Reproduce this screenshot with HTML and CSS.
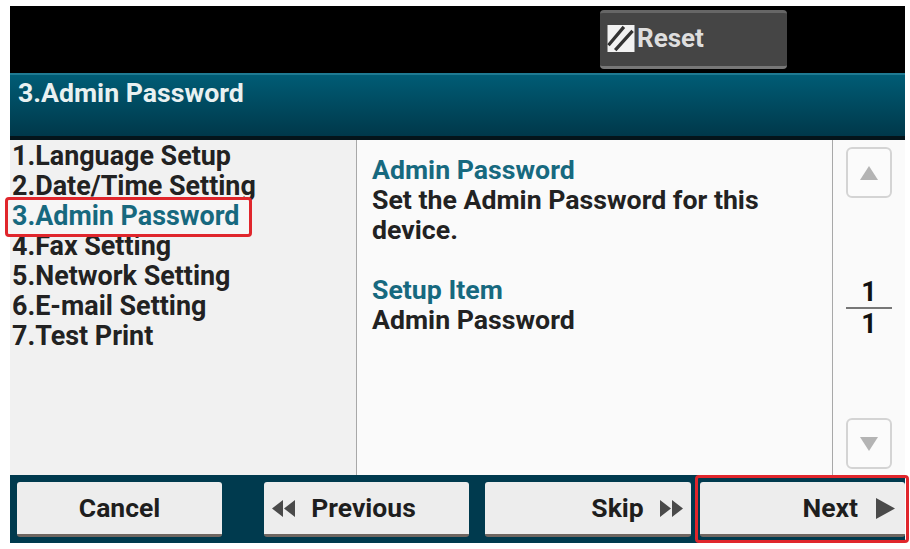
FILE: index.html
```html
<!DOCTYPE html>
<html lang="en">
<head>
<meta charset="utf-8">
<title>Admin Password</title>
<link rel="stylesheet" href="styles.css">
</head>
<body>
<div class="panel">
  <div class="topbar">
    <button class="reset">
      <svg class="reset-icon" viewBox="0 0 28 28"><rect width="28" height="28" fill="#f2f2f2"/><path d="M1 21 17 2M8 26 26 6" stroke="#333" stroke-width="3.4" fill="none"/></svg>
      <span>Reset</span>
    </button>
  </div>
  <div class="titlebar">3.Admin Password</div>
  <div class="content">
    <ul class="steps">
      <li>1.Language Setup</li>
      <li>2.Date/Time Setting</li>
      <li class="current"><span>3.Admin Password</span></li>
      <li>4.Fax Setting</li>
      <li>5.Network Setting</li>
      <li>6.E-mail Setting</li>
      <li>7.Test Print</li>
    </ul>
    <div class="detail">
      <h2>Admin Password</h2>
      <p>Set the Admin Password for this device.</p>
      <h2 class="second">Setup Item</h2>
      <p>Admin Password</p>
    </div>
    <div class="scroller">
      <div class="arrow"><svg width="18" height="14" viewBox="0 0 18 14"><path d="M9 0 18 14H0Z" fill="#b4b4b4"/></svg></div>
      <div class="pages"><span>1</span><span class="of">1</span></div>
      <div class="arrow"><svg width="18" height="14" viewBox="0 0 18 14"><path d="M0 0H18L9 14Z" fill="#b4b4b4"/></svg></div>
    </div>
  </div>
  <div class="footer">
    <button class="btn cancel">Cancel</button>
    <button class="btn previous">
      <svg class="tri" width="23" height="17" viewBox="0 0 23 17"><path d="M11 0V17L0 8.500ZM23 0V17L12 8.500Z" fill="#4a4a4a"/></svg>
      <span>Previous</span>
    </button>
    <button class="btn skip">
      <span>Skip</span>
      <svg class="tri" width="23" height="17" viewBox="0 0 23 17"><path d="M0 0V17L11 8.500ZM12 0V17L23 8.500Z" fill="#4a4a4a"/></svg>
    </button>
    <button class="btn next">
      <span>Next</span>
      <svg class="tri" width="19" height="21" viewBox="0 0 19 21"><path d="M0 0V21L19 10.500Z" fill="#4a4a4a"/></svg>
    </button>
  </div>
</div>
</body>
</html>
```
FILE: styles.css
```css
*, *::before, *::after { box-sizing: border-box; }
html, body { margin: 0; padding: 0; background: #fff; }
body { width: 910px; height: 549px; overflow: hidden; font-family: Roboto, "Liberation Sans", sans-serif; }
.panel { margin: 6px 5px 0 10px; width: 895px; height: 537px; display: flex; flex-direction: column; position: relative; }

.topbar { height: 67px; background: #000; padding: 4px 0 0 590px; flex: none; }
.reset {
  width: 187px; height: 59px; padding: 0 0 3px 7px; display: flex; align-items: center; gap: 2px;
  background: #454545; border: 0; border-radius: 4px;
  border-top: 3px solid #666; border-bottom: 3px solid #777;
  color: #dedede; font: 700 26px/1 Roboto, sans-serif;
}
.reset-icon { width: 28px; height: 27px; flex: none; }

.titlebar {
  height: 67px; flex: none; padding: 2px 0 0 8px; color: #e9f1f1;
  font-size: 26.700px; font-weight: 700; line-height: 32px;
  background: linear-gradient(#005c75, #00384a);
  border-top: 2px solid #1f7a92; border-bottom: 4px solid #04141a;
}

.content { height: 335px; flex: none; display: flex; background: #fafafa; }
.steps {
  width: 347px; flex: none; margin: 0; padding: 1px 0 0 2px; list-style: none; background: #f1f1f1;
  border-right: 1px solid #a8a8a8; color: #222; font-size: 26.900px; font-weight: 700; line-height: 30px;
}
.current { position: relative; color: #17697f; z-index: 0; }
.current::before {
  content: ""; position: absolute; z-index: -1; left: -7px; top: -4px; width: 247px; height: 40px;
  background: #f6f6f6; border: 3px solid #e0262c; border-radius: 4px;
}

.detail { width: 475px; flex: none; padding: 15px 0 0 15px; font-size: 26.700px; font-weight: 700; line-height: 30px; color: #222; }
.detail h2 { margin: 0; font: inherit; color: #17697f; }
.detail p { margin: 0; width: 420px; }
.detail .second { margin-top: 30px; }

.scroller {
  flex: 1; border-left: 1px solid #a8a8a8; padding: 7px 0 6px 13px;
  display: flex; flex-direction: column; justify-content: space-between; align-items: flex-start;
}
.arrow {
  width: 46px; height: 51px; display: flex; align-items: center; justify-content: center;
  border: 2px solid #d4d4d4; border-radius: 6px; background: #fbfbfb;
}
.pages { width: 46px; color: #111; font-size: 27px; font-weight: 700; line-height: 30px; }
.pages span { display: block; text-align: center; }
.pages .of { border-top: 2px solid #777; }

.footer {
  height: 68px; flex: none; display: flex; background: #003a4e; padding: 7px 0 6px 7px; position: relative;
}
.btn {
  width: 206px; height: 55px; display: flex; align-items: center; gap: 16px; padding: 0;
  background: #ededed; border: 0; border-bottom: 3px solid #6f6661; border-radius: 3px;
  color: #1e1e1e; font: 700 26.500px/1 Roboto, sans-serif;
}
.cancel { justify-content: center; margin-right: 42px; }
.previous { padding-left: 8px; margin-right: 16px; }
.skip { justify-content: flex-end; padding-right: 8px; margin-right: 9px; }
.next { justify-content: flex-end; gap: 18px; padding-right: 10px; position: relative; }
.next::after {
  content: ""; position: absolute; left: -5px; top: -7px; width: 214px; height: 68px;
  border: 3px solid #e0262c; border-radius: 4px;
}
```
